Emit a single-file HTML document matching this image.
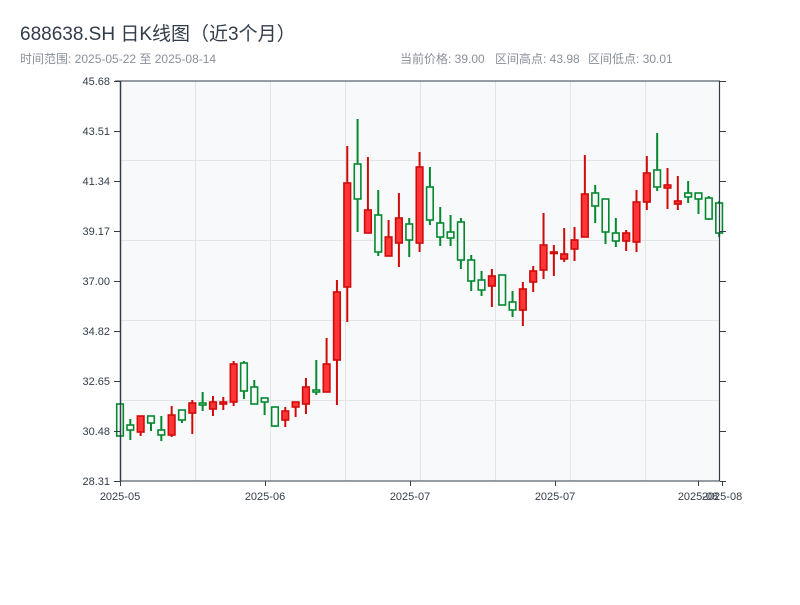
<!DOCTYPE html>
<html><head><meta charset="utf-8"><style>
body{margin:0;width:800px;height:600px;background:#fff;overflow:hidden;font-family:"Liberation Sans","Noto Sans CJK SC",sans-serif}
</style></head><body>
<svg id="s" width="800" height="600" xmlns="http://www.w3.org/2000/svg" font-family="Liberation Sans, Noto Sans CJK SC, sans-serif">
<text x="20" y="40" font-size="19" fill="#333d4a">688638.SH 日K线图（近3个月）</text>
<text x="20" y="63" font-size="12" fill="#8a9099">时间范围: 2025-05-22 至 2025-08-14</text>
<text x="400" y="63" font-size="12" fill="#8a9099">当前价格: 39.00</text>
<text x="495" y="63" font-size="12" fill="#8a9099">区间高点: 43.98</text>
<text x="588" y="63" font-size="12" fill="#8a9099">区间低点: 30.01</text>
<rect x="120" y="81" width="600" height="400" fill="#f8f9fb"/>
<g id="grid" stroke="#e2e4e8" stroke-width="1"></g>
<g id="c"></g>
<line x1="120.5" y1="81" x2="120.5" y2="481" stroke="#333d4a" stroke-width="1.5"/>
<line x1="719.5" y1="81" x2="719.5" y2="481" stroke="#333d4a" stroke-width="1.2"/>
<line x1="115" y1="81" x2="720" y2="81" stroke="#333d4a" stroke-width="1"/>
<line x1="120" y1="481" x2="720" y2="481" stroke="#333d4a" stroke-width="1"/>
<g id="ax" font-size="11" fill="#333d4a"></g>
</svg>
<script>
var ns="http://www.w3.org/2000/svg";
function el(p,t,a,txt){var e=document.createElementNS(ns,t);for(var k in a)e.setAttribute(k,a[k]);if(txt)e.textContent=txt;document.getElementById(p).appendChild(e);}
[195,270,345,420,495,570,645].forEach(function(x){el("grid","line",{x1:x+.5,y1:81,x2:x+.5,y2:481});});
[160,240,320,400].forEach(function(y){el("grid","line",{x1:120,y1:y+.5,x2:720,y2:y+.5});});
var labs=["45.68","43.51","41.34","39.17","37.00","34.82","32.65","30.48","28.31"];
labs.forEach(function(l,i){var y=81+i*50;el("ax","text",{x:110,y:y+4,"text-anchor":"end"},l);
el("ax","line",{x1:114,y1:y+.5,x2:120,y2:y+.5,stroke:"#333d4a"});
el("ax","line",{x1:720,y1:y+.5,x2:726,y2:y+.5,stroke:"#333d4a"});});
[[120,"2025-05"],[265,"2025-06"],[410,"2025-07"],[555,"2025-07"],[698,"2025-08"],[722,"2025-08"]].forEach(function(a){el("ax","text",{x:a[0],y:500,"text-anchor":"middle"},a[1]);el("ax","line",{x1:a[0]+.5,y1:481,x2:a[0]+.5,y2:486,stroke:"#333d4a"});});
var d=[
["g",404,436,404,436],["g",425,430,419,440],["r",416,432,416,436],["g",416,423,416,431],["g",430,435,416,441],["r",415,435,406,437],
["g",410,420,410,423],["r",403,413,400,434],["g",403,405,392,411],["r",402,409,396,416],["r",402,404,397,410],["r",364,402,361,406],
["g",363,391,361,399],["g",387,404,380,404],["g",398,402,398,415],["g",407,426,407,427],["r",411,420,407,427],["r",402,407,402,417],
["r",387,404,378,414],["g",390,392,360,395],["r",364,392,338,392],["r",292,360,280,405],["r",183,287,146,322],["g",164,199,119,232],
["r",210,233,157,233],["g",215,252,190,256],["r",237,256,220,256],["r",218,243,193,267],["g",224,240,218,257],["r",167,243,152,252],
["g",187,220,167,225],["g",223,237,207,246],["g",232,238,215,246],["g",222,260,218,269],["g",260,281,255,291],["g",280,290,271,296],
["r",276,286,269,307],["g",275,305,275,305],["g",302,310,291,317],["r",289,310,282,326],["r",271,282,266,292],["r",245,270,213,279],
["r",252,253,245,276],["r",254,259,228,262],["r",240,249,227,261],["r",194,237,155,237],["g",193,206,185,223],["g",199,232,199,244],
["g",233,241,218,247],["r",233,241,230,251],["r",202,242,190,252],["r",173,202,156,210],["g",170,187,133,191],["r",185,188,168,209],
["r",201,204,176,210],["g",193,197,181,203],["g",193,199,193,214],["g",198,219,196,220],["g",203,233,201,237]];
d.forEach(function(c,i){var x=120+i*10.33;var col=c[0]=="r"?"#d10a0a":"#04892f";
el("c","line",{x1:x,y1:c[3],x2:x,y2:c[4],stroke:col,"stroke-width":2});
var h=Math.max(c[2]-c[1],1.5);
el("c","rect",{x:x-3.3,y:c[1],width:6.6,height:h,fill:c[0]=="r"?"#ff3538":"#f8f9fb",stroke:col,"stroke-width":1.6});});
</script>
</body></html>
